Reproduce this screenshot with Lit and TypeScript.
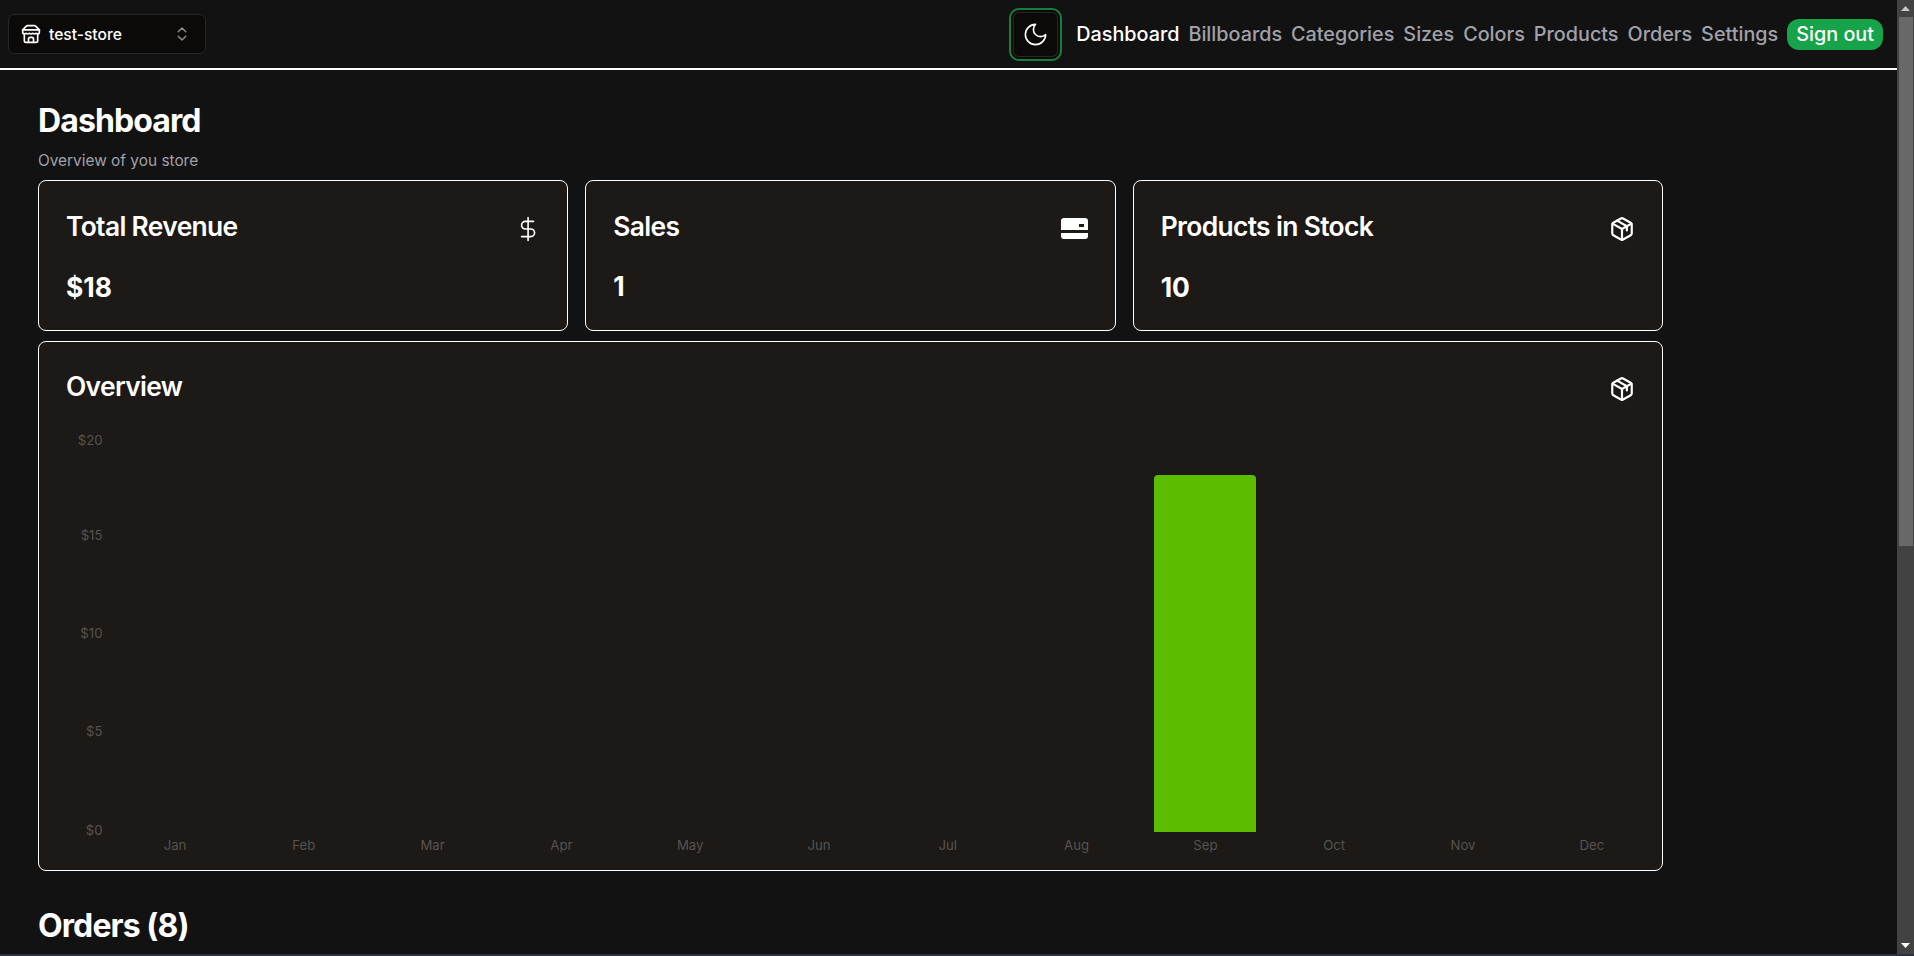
import { LitElement, html, css, svg } from 'lit';
import { customElement } from 'lit/decorators.js';

const months = ['Jan', 'Feb', 'Mar', 'Apr', 'May', 'Jun', 'Jul', 'Aug', 'Sep', 'Oct', 'Nov', 'Dec'];
const links = ['Billboards', 'Categories', 'Sizes', 'Colors', 'Products', 'Orders', 'Settings'];
const ticks = [
  { label: '$20', y: 43 },
  { label: '$15', y: 138 },
  { label: '$10', y: 236 },
  { label: '$5', y: 334 },
  { label: '$0', y: 433 },
];

const packageIcon = html`<svg class="icon" viewBox="0 0 24 24" fill="none" stroke="currentColor" stroke-width="2" stroke-linecap="round" stroke-linejoin="round">
  <path d="m7.5 4.27 9 5.15v4"></path>
  <path d="M21 8a2 2 0 0 0-1-1.73l-7-4a2 2 0 0 0-2 0l-7 4A2 2 0 0 0 3 8v8a2 2 0 0 0 1 1.73l7 4a2 2 0 0 0 2 0l7-4A2 2 0 0 0 21 16Z"></path>
  <path d="m3.3 7 8.7 5 8.7-5"></path>
  <path d="M12 22V12"></path>
</svg>`;

const dollarIcon = html`<svg class="icon" viewBox="-1 0 24 24" fill="none" stroke="currentColor" stroke-width="1.5" stroke-linecap="round" stroke-linejoin="round">
  <line x1="12" x2="12" y1="1.5" y2="22.5"></line>
  <path d="M17 5H9.5a3.5 3.5 0 0 0 0 7h5a3.5 3.5 0 0 1 0 7H6"></path>
</svg>`;

const cardIcon = html`<svg class="icon wide" viewBox="0 0 27 21" fill="currentColor">
  <path d="M0 3a3 3 0 0 1 3-3h21a3 3 0 0 1 3 3v9H0Z"></path>
  <path d="M0 15h27v3a3 3 0 0 1-3 3H3a3 3 0 0 1-3-3Z"></path>
  <rect x="18" y="6" width="5" height="3" fill="#1c1917"></rect>
</svg>`;

@customElement('app-root')
export class AppRoot extends LitElement {
  static styles = css`
    :host {
      display: flex;
      box-sizing: border-box;
      height: 956px;
      overflow: hidden;
      background: #121212;
      color: #fff;
      font-family: Inter, 'Liberation Sans', sans-serif;
      border-bottom: 2px solid #2b3040;
    }

    .page {
      flex: 1;
      min-width: 0;
    }

    .scrollbar {
      width: 17px;
      display: flex;
      flex-direction: column;
      background: #424242;
    }

    .arrow {
      height: 17px;
      display: flex;
      align-items: center;
      justify-content: center;
    }

    .thumb {
      height: 529px;
      margin: 0 1px 0 2px;
      background: #686868;
    }

    .track {
      flex: 1;
    }

    .topbar {
      height: 68px;
      display: flex;
      align-items: center;
      justify-content: space-between;
      padding: 0 14px 0 8px;
      border-bottom: 2px solid #fff;
    }

    .switcher {
      width: 198px;
      height: 40px;
      box-sizing: border-box;
      display: flex;
      align-items: center;
      gap: 8px;
      padding: 0 14px 0 12px;
      background: #0c0a09;
      border: 1px solid #27272a;
      border-radius: 6px;
      font-size: 15.6px;
      font-weight: 500;
    }

    .switcher span {
      flex: 1;
    }

    .switcher svg {
      display: block;
      flex: none;
    }

    .nav {
      display: flex;
      align-items: center;
      gap: 9px;
      font-size: 19.8px;
      font-weight: 500;
      color: #a1a1aa;
    }

    .theme {
      width: 53px;
      height: 53px;
      box-sizing: border-box;
      display: flex;
      align-items: center;
      justify-content: center;
      margin-right: 5px;
      background: #0c0a09;
      border: 2px solid #15803d;
      border-radius: 10px;
      box-shadow: inset 0 0 0 2px #0c0a09, inset 0 0 0 3px #27272a;
      color: #fff;
    }

    .active {
      color: #fff;
    }

    .signout {
      height: 31px;
      display: flex;
      align-items: center;
      padding: 0 9px;
      background: #16a34a;
      border-radius: 12px;
      color: #fff;
    }

    .content {
      padding: 33px 0 0 38px;
      width: 1625px;
    }

    h1,
    h2,
    h3 {
      margin: 0;
    }

    h1,
    h2 {
      font-size: 32px;
      font-weight: 700;
      line-height: 36px;
      letter-spacing: -0.9px;
    }

    .sub {
      margin: 11px 0 8px;
      font-size: 15.4px;
      line-height: 22px;
      color: #a1a1aa;
    }

    .stats {
      display: grid;
      grid-template-columns: repeat(3, 1fr);
      gap: 17px;
    }

    .card {
      box-sizing: border-box;
      background: #1c1917;
      border: 1px solid #fff;
      border-radius: 8px;
    }

    .stat {
      height: 151px;
    }

    .head {
      display: flex;
      align-items: flex-start;
      justify-content: space-between;
      padding: 30px 27px 0;
    }

    h3 {
      font-size: 26.4px;
      font-weight: 600;
      line-height: 30px;
      letter-spacing: -0.66px;
    }

    .icon {
      display: block;
      width: 26px;
      height: 26px;
      margin-top: 5px;
    }

    .icon.wide {
      width: 27px;
      height: 21px;
      margin-top: 7px;
    }

    .value {
      padding: 29px 27px 0;
      font-size: 26.4px;
      font-weight: 700;
      line-height: 32px;
    }

    .overview {
      height: 530px;
      margin-top: 10px;
    }

    .overview .head {
      padding-top: 29px;
    }

    .chart {
      display: block;
    }

    .chart text {
      font-size: 13.2px;
      font-family: Inter, 'Liberation Sans', sans-serif;
      fill: #57534e;
    }

    h2 {
      margin-top: 37px;
    }
  `;

  render() {
    return html`
      <div class="page">
        <header class="topbar">
          <div class="switcher">
            <svg width="20" height="20" viewBox="0 0 24 24" fill="none" stroke="currentColor" stroke-width="2" stroke-linecap="round" stroke-linejoin="round">
              <path d="m2 7 4.41-4.41A2 2 0 0 1 7.83 2h8.34a2 2 0 0 1 1.42.59L22 7"></path>
              <path d="M4 12v8a2 2 0 0 0 2 2h12a2 2 0 0 0 2-2v-8"></path>
              <path d="M15 22v-4a2 2 0 0 0-2-2h-2a2 2 0 0 0-2 2v4"></path>
              <path d="M2 7h20"></path>
              <path d="M22 7v3a2 2 0 0 1-2 2a2.7 2.7 0 0 1-1.59-.63.7.7 0 0 0-.82 0A2.7 2.7 0 0 1 16 12a2.7 2.7 0 0 1-1.59-.63.7.7 0 0 0-.82 0A2.7 2.7 0 0 1 12 12a2.7 2.7 0 0 1-1.59-.63.7.7 0 0 0-.82 0A2.7 2.7 0 0 1 8 12a2.7 2.7 0 0 1-1.59-.63.7.7 0 0 0-.82 0A2.7 2.7 0 0 1 4 12a2 2 0 0 1-2-2V7"></path>
            </svg>
            <span>test-store</span>
            <svg width="18" height="18" viewBox="0 0 24 24" fill="none" stroke="#8a8a8a" stroke-width="2" stroke-linecap="round" stroke-linejoin="round">
              <path d="m7 15 5 5 5-5"></path>
              <path d="m7 9 5-5 5 5"></path>
            </svg>
          </div>
          <nav class="nav">
            <div class="theme">
              <svg width="27" height="27" viewBox="0 0 24 24" fill="none" stroke="currentColor" stroke-width="1.4" stroke-linecap="round" stroke-linejoin="round">
                <path d="M12 3a6 6 0 0 0 9 9 9 9 0 1 1-9-9Z"></path>
              </svg>
            </div>
            <span class="active">Dashboard</span>
            ${links.map((link) => html`<span>${link}</span>`)}
            <span class="signout">Sign out</span>
          </nav>
        </header>
        <main class="content">
          <h1>Dashboard</h1>
          <p class="sub">Overview of you store</p>
          <section class="stats">
            <div class="card stat">
              <div class="head"><h3>Total Revenue</h3>${dollarIcon}</div>
              <div class="value">$18</div>
            </div>
            <div class="card stat">
              <div class="head"><h3>Sales</h3>${cardIcon}</div>
              <div class="value">1</div>
            </div>
            <div class="card stat">
              <div class="head"><h3>Products in Stock</h3>${packageIcon}</div>
              <div class="value">10</div>
            </div>
          </section>
          <section class="card overview">
            <div class="head"><h3>Overview</h3>${packageIcon}</div>
            <svg class="chart" width="1623" height="468" viewBox="0 0 1623 468">${this.renderChart()}</svg>
          </section>
          <h2>Orders (8)</h2>
        </main>
      </div>
      <div class="scrollbar">
        <div class="arrow"><svg width="9" height="5" viewBox="0 0 9 5"><path d="M4.5 0 9 5H0Z" fill="#c8c8c8"></path></svg></div>
        <div class="thumb"></div>
        <div class="track"></div>
        <div class="arrow"><svg width="9" height="5" viewBox="0 0 9 5"><path d="M4.5 5 9 0H0Z" fill="#fff"></path></svg></div>
      </div>
    `;
  }

  renderChart() {
    return svg`
      ${ticks.map((t) => svg`<text x="63.5" y=${t.y} text-anchor="end">${t.label}</text>`)}
      ${months.map((m, i) => svg`<text x=${136 + i * 128.8} y="448" text-anchor="middle">${m}</text>`)}
      <path d="M1115 430V77a4 4 0 0 1 4-4h94a4 4 0 0 1 4 4v353Z" fill="#5cbc00"></path>
    `;
  }
}
